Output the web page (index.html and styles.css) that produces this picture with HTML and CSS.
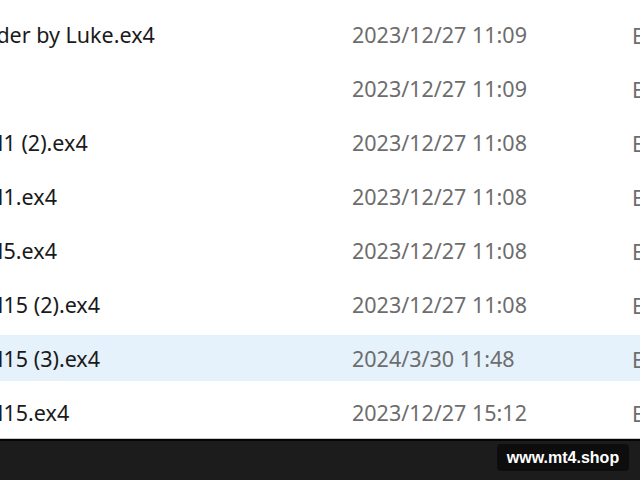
FILE: index.html
```html
<!DOCTYPE html>
<html lang="en">
<head>
<meta charset="utf-8">
<link rel="stylesheet" href="styles.css">
</head>
<body>
<div class="screen">
  <div class="list">
    <div class="row"><span class="name">Trader by Luke.ex4</span><span class="date">2023/12/27 11:09</span><span class="type">EX4 文件</span></div>
    <div class="row"><span class="name">&nbsp;</span><span class="date">2023/12/27 11:09</span><span class="type">EX4 文件</span></div>
    <div class="row"><span class="name">M1 (2).ex4</span><span class="date">2023/12/27 11:08</span><span class="type">EX4 文件</span></div>
    <div class="row"><span class="name">M1.ex4</span><span class="date">2023/12/27 11:08</span><span class="type">EX4 文件</span></div>
    <div class="row"><span class="name">M5.ex4</span><span class="date">2023/12/27 11:08</span><span class="type">EX4 文件</span></div>
    <div class="row"><span class="name">M15 (2).ex4</span><span class="date">2023/12/27 11:08</span><span class="type">EX4 文件</span></div>
    <div class="row selected"><span class="name">M15 (3).ex4</span><span class="date">2024/3/30 11:48</span><span class="type">EX4 文件</span></div>
    <div class="row"><span class="name">M15.ex4</span><span class="date">2023/12/27 15:12</span><span class="type">EX4 文件</span></div>
  </div>
  <div class="taskbar">
    <span class="badge">www.mt4.shop</span>
  </div>
</div>
</body>
</html>
```
FILE: styles.css
```css
html, body {
  margin: 0;
  padding: 0;
  width: 640px;
  height: 480px;
  overflow: hidden;
  background: #ffffff;
}
.screen {
  width: 640px;
  height: 480px;
  display: flex;
  flex-direction: column;
  overflow: hidden;
}
.list {
  flex: 1;
  display: flex;
  flex-direction: column;
  gap: 8px;
  padding-top: 11px;
  overflow: hidden;
  font-family: "Noto Sans", "Noto Sans CJK SC", sans-serif;
  font-size: 21.5px;
}
.row {
  height: 46px;
  flex: none;
  display: flex;
  align-items: center;
  white-space: nowrap;
}
.row.selected {
  background: #e5f1fb;
}
.name {
  width: 368px;
  margin-left: -16px;
  flex: none;
  color: #1a1a1a;
  overflow: hidden;
}
.row:first-child .name {
  margin-left: -35px;
  width: 387px;
}
.date {
  width: 280px;
  flex: none;
  color: #6d6d6d;
}
.type {
  flex: none;
  color: #6d6d6d;
}
.taskbar {
  height: 41px;
  flex: none;
  background: #1c1c1c;
  border-top: 1px solid #c8c8c8;
  box-shadow: inset 0 2px 0 #050505;
  display: flex;
  align-items: flex-start;
  justify-content: flex-end;
  padding-right: 11px;
}
.badge {
  margin-top: 5px;
  width: 132px;
  height: 27px;
  background: #0d0d0d;
  border-radius: 4px;
  color: #ffffff;
  font-family: "Liberation Sans", Arial, sans-serif;
  font-weight: bold;
  font-size: 16px;
  display: flex;
  align-items: center;
  justify-content: center;
}
```
